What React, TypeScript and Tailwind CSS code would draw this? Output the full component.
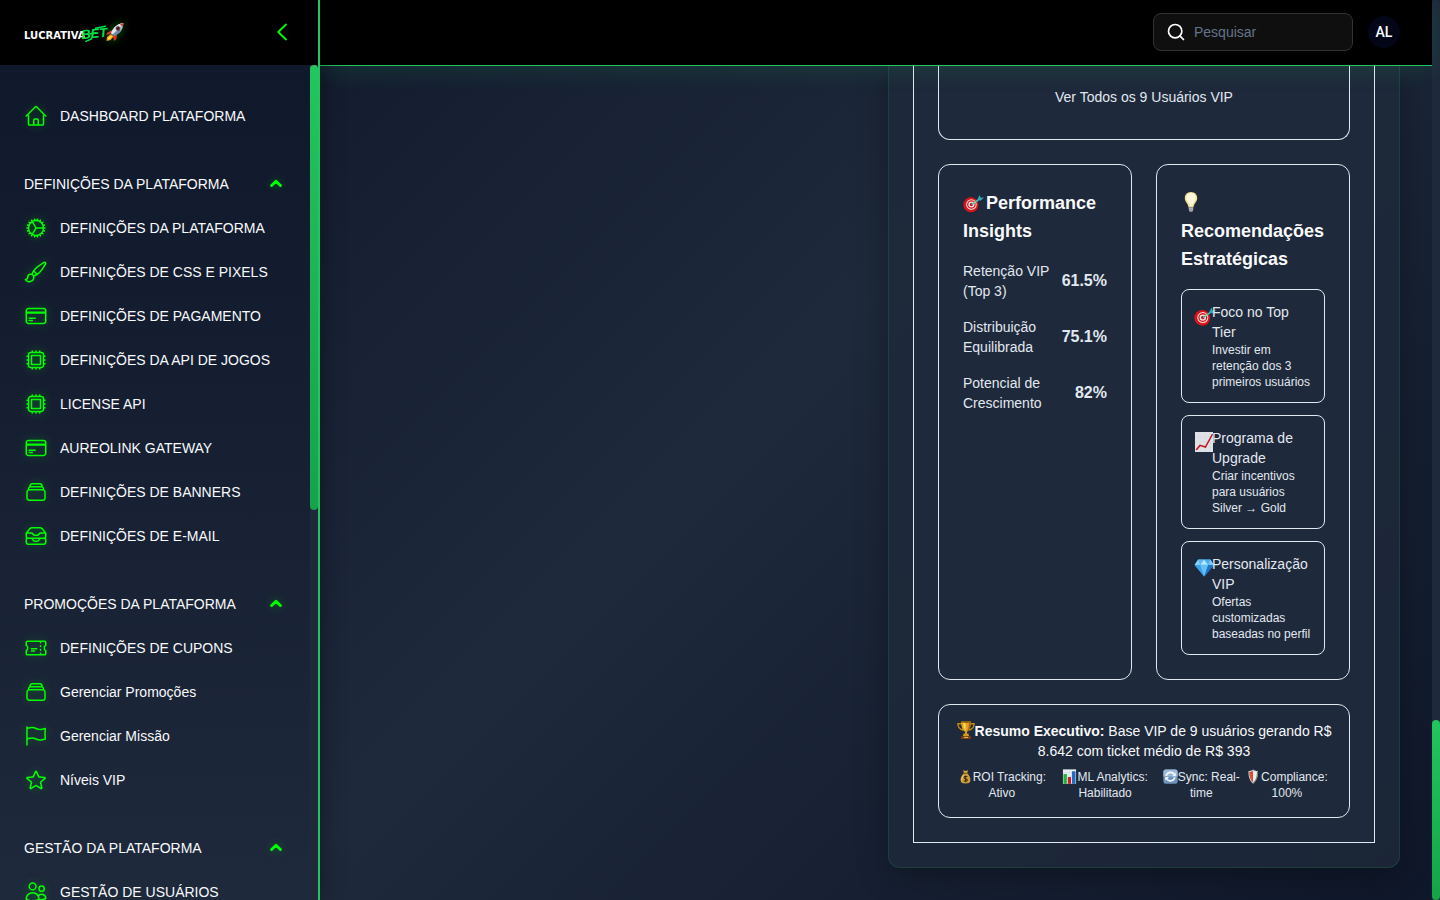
import type { ComponentType, ReactNode } from "react";
import {
  HiOutlineCog,
  HiOutlineCpuChip,
  HiOutlineCreditCard,
  HiOutlineFlag,
  HiOutlineHome,
  HiOutlineInboxStack,
  HiOutlinePaintBrush,
  HiOutlineRectangleStack,
  HiOutlineStar,
  HiOutlineTicket,
  HiOutlineUsers,
} from "react-icons/hi2";
import { Search } from "lucide-react";

type IconType = ComponentType<{ className?: string }>;
type NavItem = { label: string; icon: IconType };
type NavSection = { title: string; items: NavItem[] };

const sections: NavSection[] = [
  {
    title: "DEFINIÇÕES DA PLATAFORMA",
    items: [
      { label: "DEFINIÇÕES DA PLATAFORMA", icon: HiOutlineCog },
      { label: "DEFINIÇÕES DE CSS E PIXELS", icon: HiOutlinePaintBrush },
      { label: "DEFINIÇÕES DE PAGAMENTO", icon: HiOutlineCreditCard },
      { label: "DEFINIÇÕES DA API DE JOGOS", icon: HiOutlineCpuChip },
      { label: "LICENSE API", icon: HiOutlineCpuChip },
      { label: "AUREOLINK GATEWAY", icon: HiOutlineCreditCard },
      { label: "DEFINIÇÕES DE BANNERS", icon: HiOutlineRectangleStack },
      { label: "DEFINIÇÕES DE E-MAIL", icon: HiOutlineInboxStack },
    ],
  },
  {
    title: "PROMOÇÕES DA PLATAFORMA",
    items: [
      { label: "DEFINIÇÕES DE CUPONS", icon: HiOutlineTicket },
      { label: "Gerenciar Promoções", icon: HiOutlineRectangleStack },
      { label: "Gerenciar Missão", icon: HiOutlineFlag },
      { label: "Níveis VIP", icon: HiOutlineStar },
    ],
  },
  {
    title: "GESTÃO DA PLATAFORMA",
    items: [{ label: "GESTÃO DE USUÁRIOS", icon: HiOutlineUsers }],
  },
];

function Rocket({ className }: { className?: string }) {
  return (
    <svg viewBox="0 0 20 20" className={className} aria-hidden="true">
      <path d="M7 8 L2.5 10.5 L1 13 L5.5 12Z" fill="#e0301e" />
      <path d="M12 13 L11.5 17 L9 19 L8 14Z" fill="#e0301e" />
      <path d="M6 12 L2 15 L1.5 19 L5.5 18 L8.5 14.5Z" fill="#ff9d1e" />
      <path d="M6 13.5 L3 16 L2.8 17.6 L5 17 L7 14.5Z" fill="#ffe04a" />
      <path d="M18.5 1 C13 1.5 8.5 5 6 11 L9 14 C15 11.5 18 7.5 18.5 1Z" fill="#aebfd0" />
      <path d="M18.5 1 C13 1.5 8.5 5 6 11 L7.4 12.4Z" fill="#dfe8ef" />
      <path d="M18.5 1 L14.8 2 L17.6 4.8Z" fill="#d8372a" />
      <path d="M9 14 C12 12.8 14.5 11 16 9 L14 7.5 L7.5 12.5Z" fill="#6c86a5" />
      <circle cx="13" cy="6.5" r="2" fill="#3c2530" stroke="#8c3a38" strokeWidth=".7" />
    </svg>
  );
}

function Dart({ className }: { className?: string }) {
  return (
    <svg viewBox="0 0 22 20" className={className} aria-hidden="true">
      <circle cx="9" cy="12.6" r="7.2" fill="#8f0f14" />
      <circle cx="8.2" cy="11.8" r="7.8" fill="#d9151b" />
      <circle cx="8.8" cy="11.6" r="5.5" fill="#f3e3e3" />
      <circle cx="8.8" cy="11.6" r="4.5" fill="#d9151b" />
      <circle cx="8.8" cy="11.6" r="3.2" fill="#f6e9e9" />
      <circle cx="8.8" cy="11.6" r="1.8" fill="#c91018" />
      <path d="M9 11.6 L17.5 5.6" stroke="#39c3cf" strokeWidth="1.7" />
      <path d="M11 9.6 L13 9.2" stroke="#e8c53a" strokeWidth="1.4" />
      <path d="M15.2 6.2 L17.4 1.6 L18.6 4.4 L22 4.2 L18.4 7.6Z" fill="#3aa7b5" />
    </svg>
  );
}

function Bulb({ className }: { className?: string }) {
  return (
    <svg viewBox="0 0 20 22" className={className} aria-hidden="true">
      <path d="M10 1 C6 1 3.8 3.8 3.8 7.2 C3.8 11 7.2 12.5 7.6 16.5 H12.4 C12.8 12.5 16.2 11 16.2 7.2 C16.2 3.8 14 1 10 1Z" fill="#f6dd92" />
      <path d="M10 2 C7 2 5.2 4.2 5.2 7 C5.2 10 8.4 11.8 8.6 15 H11.4 C11.6 11.8 14.8 10 14.8 7 C14.8 4.2 13 2 10 2Z" fill="#fff7dc" />
      <path d="M7.8 16 H12.2 V19 C12.2 20.6 11 21 10 21 C9 21 7.8 20.6 7.8 19Z" fill="#8b8d90" />
      <path d="M7.8 17.4 H12.2 M8 19 H12" stroke="#c9cbce" strokeWidth=".7" />
    </svg>
  );
}

function ChartUp({ className }: { className?: string }) {
  return (
    <svg viewBox="0 0 22 22" className={className} aria-hidden="true">
      <rect x="1" y="1" width="18" height="20" fill="#dfe3e8" />
      <path d="M1 6 H19 M1 11 H19 M1 16 H19 M6 1 V21 M11 1 V21 M16 1 V21" stroke="#cdd4da" strokeWidth=".5" />
      <path d="M2.2 19 L6 14.4 L11.4 16 L18.6 3" fill="none" stroke="#c4131c" strokeWidth="1.5" />
    </svg>
  );
}

function Gem({ className }: { className?: string }) {
  return (
    <svg viewBox="0 0 22 20" className={className} aria-hidden="true">
      <path d="M4.2 1.5 H16.4 L20 7 L10.2 18.5 L.6 7Z" fill="#3ea1e8" />
      <path d="M.6 7 L4.2 1.5 L6.2 6.8Z" fill="#8bd4fb" />
      <path d="M4.2 1.5 H10.2 L6.2 6.8Z" fill="#5cb9f3" />
      <path d="M10.2 1.5 L14.2 6.8 H6.2Z" fill="#b4e6ff" />
      <path d="M10.2 1.5 H16.4 L14.2 6.8Z" fill="#4aaeee" />
      <path d="M16.4 1.5 L20 7 L14.2 6.8Z" fill="#7fcbf7" />
      <path d="M.6 7 H6.2 L10.2 18.5Z" fill="#3aa0ea" />
      <path d="M6.2 7 H14.2 L10.2 18.5Z" fill="#62c0f6" />
      <path d="M14.2 7 H20 L10.2 18.5Z" fill="#1f73c4" />
    </svg>
  );
}

function Trophy({ className }: { className?: string }) {
  return (
    <svg viewBox="0 0 20 20" className={className} aria-hidden="true">
      <path d="M5 3 H1 C1 7.5 4 9.5 7 10 M15 3 H19 C19 7.5 16 9.5 13 10" fill="none" stroke="#c98a14" strokeWidth="1.5" />
      <path d="M4.6 .6 H15.4 C15.4 7 13.6 11 11 12 V14.5 H9 V12 C6.4 11 4.6 7 4.6 .6Z" fill="#e0a21c" />
      <path d="M7 2 C7 6.5 8 9.5 9.6 10.8 L9.4 2Z" fill="#fbdc6a" />
      <path d="M15.4 .6 C15.4 7 13.6 11 11 12 C12.8 9 13.4 5 13.3 1Z" fill="#a86b0c" />
      <ellipse cx="10" cy="1.2" rx="5.4" ry=".9" fill="#8f5b0a" />
      <path d="M7.4 14 H12.6 L13.6 17 H6.4Z" fill="#d6971a" />
      <path d="M4.4 17 H15.6 V20 H4.4Z" fill="#7a3d12" />
      <path d="M7.5 17.6 H12.5 V19 H7.5Z" fill="#d9b04a" />
    </svg>
  );
}

function MoneyBag({ className }: { className?: string }) {
  return (
    <svg viewBox="0 0 16 16" className={className} aria-hidden="true">
      <path d="M5.5 1.4 L8 2.2 L10.6 1.2 L9.8 4.4 H6.4Z" fill="#d9a83f" />
      <path d="M6.4 4.6 H9.8 C12 6.5 13.6 9.5 13.2 12.6 C13 15 11 15.4 8 15.4 C5 15.4 3 15 2.8 12.6 C2.4 9.5 4.2 6.5 6.4 4.6Z" fill="#cf9e3a" />
      <path d="M5 7 C3.6 9 3.3 11 3.8 13 C5 10 5.4 9 6.6 6Z" fill="#eccb75" />
      <path d="M6 4.5 H10.2" stroke="#7b5013" strokeWidth="1" />
      <path d="M10 8.3 C9.3 7.4 6.4 7.3 6.4 9 C6.4 10.8 10 10 10 11.8 C10 13.5 7 13.4 6.2 12.3 M8.1 6.8 V14" fill="none" stroke="#3c2b0c" strokeWidth="1.1" />
    </svg>
  );
}

function BarChart({ className }: { className?: string }) {
  return (
    <svg viewBox="0 0 16 16" className={className} aria-hidden="true">
      <rect x="1" y=".4" width="14" height="15.4" fill="#e8edf2" />
      <path d="M1 4 H15 M1 7.6 H15 M1 11.2 H15" stroke="#c3ccd5" strokeWidth=".5" />
      <rect x="1.6" y="5.4" width="3.6" height="10.4" fill="#19b836" />
      <rect x="6.2" y="8.6" width="3.4" height="7.2" fill="#cf1924" />
      <rect x="10.6" y="2.4" width="3.8" height="13.4" fill="#1f6cc0" />
    </svg>
  );
}

function Refresh({ className }: { className?: string }) {
  return (
    <svg viewBox="0 0 16 16" className={className} aria-hidden="true">
      <rect x=".4" y=".4" width="15.2" height="15.2" rx="2.4" fill="#6d93bb" />
      <path d="M2.8 .4 H13.2 C14.5 .4 15.6 1.5 15.6 2.8 V8 H.4 V2.8 C.4 1.5 1.5 .4 2.8 .4Z" fill="#9bb9d6" />
      <path d="M3.4 7.4 C4 3.2 10 2.2 12 5.6 M12.6 8.8 C12 13 6 14 4 10.6" fill="none" stroke="#f4f8fb" strokeWidth="1.8" />
      <path d="M13.6 3.6 V7.8 H9.6Z M2.4 12.6 V8.4 H6.4Z" fill="#f4f8fb" />
    </svg>
  );
}

function Shield({ className }: { className?: string }) {
  return (
    <svg viewBox="0 0 16 16" className={className} aria-hidden="true">
      <path d="M2.6 2.2 C4.6 2.2 6.4 1.6 7.6 .6 C8.8 1.6 10.6 2.2 12.8 2.2 C13 8 11.6 12.8 7.6 15.6 C3.8 12.8 2.4 8 2.6 2.2Z" fill="#c9ced3" />
      <path d="M3.6 3.2 C5.4 3 6.8 2.6 7.6 1.8 V14.2 C4.7 11.8 3.5 8 3.6 3.2Z" fill="#e2452f" />
      <path d="M7.6 1.8 C8.6 2.6 10 3 11.6 3.2 C11.6 8 10.4 11.8 7.6 14.2Z" fill="#f4efec" />
      <path d="M5 6 H7 M5 8.5 H7 M5.4 11 H7" stroke="#8f8a86" strokeWidth=".7" />
      <path d="M12.8 2.2 C13 8 11.6 12.8 7.6 15.6 L8 14.2 C11 11.4 11.8 7.6 11.7 3.2Z" fill="#6d7378" />
    </svg>
  );
}

function Logo() {
  return (
    <a href="#" aria-label="Lucrativa Bet" className="flex items-center">
      <span className="pt-2 font-['DejaVu_Sans',sans-serif] text-[10px] leading-4 font-bold text-white">LUCRATIVA</span>
      <span className="relative -ml-1 -rotate-6 pt-1 font-['Liberation_Sans_Narrow',sans-serif] text-[13px] leading-4 font-black text-[#00e048] italic">
        BET
        <svg viewBox="0 0 24 20" fill="none" stroke="currentColor" strokeLinecap="round" className="absolute inset-0 size-full" aria-hidden="true">
          <path d="M14 6.5 L24 5.5" strokeWidth="1.6" />
          <path d="M3 18.5 L9 16.5 M7 11.5 L14 11" strokeWidth="1.6" />
        </svg>
      </span>
      <Rocket className="-ml-0.5 size-5 drop-shadow-[0_0_4px_#00ff0066]" />
    </a>
  );
}

function NavLink({ item }: { item: NavItem }) {
  const Icon = item.icon;
  return (
    <a href="#" className="flex h-11 shrink-0 items-center gap-3 px-6 whitespace-nowrap">
      <Icon className="size-6 shrink-0 text-[#00ff00] drop-shadow-[0_0_4px_#00ff004d]" />
      {item.label}
    </a>
  );
}

function Sidebar() {
  return (
    <aside className="relative z-20 flex w-80 shrink-0 flex-col overflow-hidden border-r-2 border-[#22c55e] bg-linear-to-b from-[#0f172a] to-[#1e293b] text-sm text-[#f8fafc] shadow-[4px_0_20px_#0000004d]">
      <div className="flex h-[65px] shrink-0 items-center justify-between bg-black px-6 pb-px">
        <Logo />
        <button type="button" aria-label="Recolher menu" className="text-[#00ff00]">
          <svg viewBox="0 0 24 24" fill="none" stroke="currentColor" strokeWidth="1.8" strokeLinecap="round" strokeLinejoin="round" className="size-6">
            <path d="M16 4.5 8.2 12 16 19.5" />
          </svg>
        </button>
      </div>
      <div className="flex min-h-0 flex-1">
        <nav className="flex flex-1 flex-col gap-6 overflow-hidden pt-[29px]">
          <NavLink item={{ label: "DASHBOARD PLATAFORMA", icon: HiOutlineHome }} />
          {sections.map((section) => (
            <section key={section.title} className="shrink-0">
              <button type="button" className="flex h-11 w-full items-center justify-between px-6 text-left whitespace-nowrap">
                {section.title}
                <svg viewBox="0 0 20 20" fill="none" stroke="currentColor" strokeWidth="2.8" strokeLinecap="round" strokeLinejoin="round" className="size-5 text-[#00ff00] drop-shadow-[0_0_4px_#00ff004d]">
                  <path d="M5.6 11.6 10 7.2 14.4 11.6" />
                </svg>
              </button>
              {section.items.map((item) => (
                <NavLink key={item.label} item={item} />
              ))}
            </section>
          ))}
        </nav>
        <div className="w-2 bg-[#1e293b]">
          <div className="h-[53.3%] rounded bg-linear-to-b from-[#22c55e] to-[#16a34a]" />
        </div>
      </div>
    </aside>
  );
}

function Header() {
  return (
    <header className="relative z-10 flex h-[66px] shrink-0 items-center justify-end gap-[15px] border-b border-[#22c55e] bg-black pr-8 pb-px shadow-[0_4px_24px_#22c55e26]">
      <label className="flex h-[38px] w-[200px] items-center gap-2 rounded-lg border border-[#333333] bg-[#0f0f0f] px-3">
        <Search className="size-5 shrink-0 text-white" />
        <input
          type="search"
          aria-label="Pesquisar"
          placeholder="Pesquisar"
          className="w-full min-w-0 bg-transparent text-sm text-white outline-none placeholder:text-[#64748b]"
        />
      </label>
      <button type="button" className="size-8 rounded-full bg-[#020617] font-['Roboto',sans-serif] text-sm font-medium text-white">
        AL
      </button>
    </header>
  );
}

function Panel({ children, className = "" }: { children: ReactNode; className?: string }) {
  return <div className={`rounded-xl border border-[#e2e8f0] ${className}`}>{children}</div>;
}

const insights = [
  { label: "Retenção VIP (Top 3)", value: "61.5%" },
  { label: "Distribuição Equilibrada", value: "75.1%" },
  { label: "Potencial de Crescimento", value: "82%" },
];

const tips: { icon: IconType; title: string; text: string }[] = [
  { icon: Dart, title: "Foco no Top Tier", text: "Investir em retenção dos 3 primeiros usuários" },
  { icon: ChartUp, title: "Programa de Upgrade", text: "Criar incentivos para usuários Silver → Gold" },
  { icon: Gem, title: "Personalização VIP", text: "Ofertas customizadas baseadas no perfil" },
];

const statuses: { icon: IconType; text: string }[] = [
  { icon: MoneyBag, text: "ROI Tracking: Ativo" },
  { icon: BarChart, text: "ML Analytics: Habilitado" },
  { icon: Refresh, text: "Sync: Real-time" },
  { icon: Shield, text: "Compliance: 100%" },
];

function VipReport() {
  return (
    <div className="col-start-2 rounded-b-xl border border-t-0 border-[#22c55e26] bg-[#1e293bcc] px-6 pb-6 shadow-[0_8px_32px_#0000004d]">
      <div className="flex flex-col gap-6 border border-t-0 border-[#e2e8f0] bg-[#1e293b] px-6 pb-6 text-[#e2e8f0]">
        <Panel className="flex justify-center rounded-t-none border-t-0 px-6 pt-[21px] pb-8">
          <button type="button" className="text-sm">
            Ver Todos os 9 Usuários VIP
          </button>
        </Panel>

        <div className="grid grid-cols-2 gap-6">
          <Panel className="p-6">
            <h3 className="mb-4 text-lg leading-7 font-bold text-[#f8fafc]">
              <Dart className="mr-0.5 inline-block h-5 w-[21px] align-[-4px]" />
              Performance Insights
            </h3>
            <dl className="flex flex-col gap-4">
              {insights.map((row) => (
                <div key={row.label} className="flex items-center justify-between gap-2">
                  <dt className="text-sm">{row.label}</dt>
                  <dd className="font-bold">{row.value}</dd>
                </div>
              ))}
            </dl>
          </Panel>

          <Panel className="p-6">
            <h3 className="mb-4 text-lg leading-7 font-bold text-[#f8fafc]">
              <Bulb className="mr-1 inline-block h-[22px] w-5 align-[-4px]" /> Recomendações Estratégicas
            </h3>
            <ul className="flex flex-col gap-3">
              {tips.map(({ icon: Icon, title, text }) => (
                <li key={title} className="flex items-start rounded-lg border border-[#e2e8f0] p-3">
                  <span className="w-[18px] shrink-0 pt-[3px]">
                    <Icon className="size-[22px] max-w-none" />
                  </span>
                  <div>
                    <p className="text-sm">{title}</p>
                    <p className="text-xs">{text}</p>
                  </div>
                </li>
              ))}
            </ul>
          </Panel>
        </div>

        <Panel className="p-4 text-center">
          <p className="text-sm text-[#f8fafc]">
            <Trophy className="inline-block size-[18px] align-[-3px]" />
            <strong>Resumo Executivo:</strong> Base VIP de 9 usuários gerando R$ 8.642 com ticket médio de R$ 393
          </p>
          <div className="mt-2 flex justify-center text-xs">
            {statuses.map(({ icon: Icon, text }) => (
              <p key={text}>
                <Icon className="inline-block size-[15px] align-[-3px]" />
                {text}
              </p>
            ))}
          </div>
        </Panel>
      </div>
    </div>
  );
}

export default function App() {
  return (
    <div className="flex h-screen overflow-hidden bg-linear-135 from-[#0f172a] via-[#1e293b] to-[#0f172a] font-['Liberation_Sans',Arial,sans-serif]">
      <Sidebar />
      <div className="flex min-w-0 flex-1 flex-col">
        <Header />
        <main className="grid grid-cols-2 items-start gap-6 overflow-hidden px-8 pb-8">
          <VipReport />
        </main>
      </div>
      <div className="flex w-2 shrink-0 flex-col justify-end rounded-t bg-[#1e293b]">
        <div className="h-1/5 rounded bg-linear-to-b from-[#22c55e] to-[#16a34a]" />
      </div>
    </div>
  );
}
